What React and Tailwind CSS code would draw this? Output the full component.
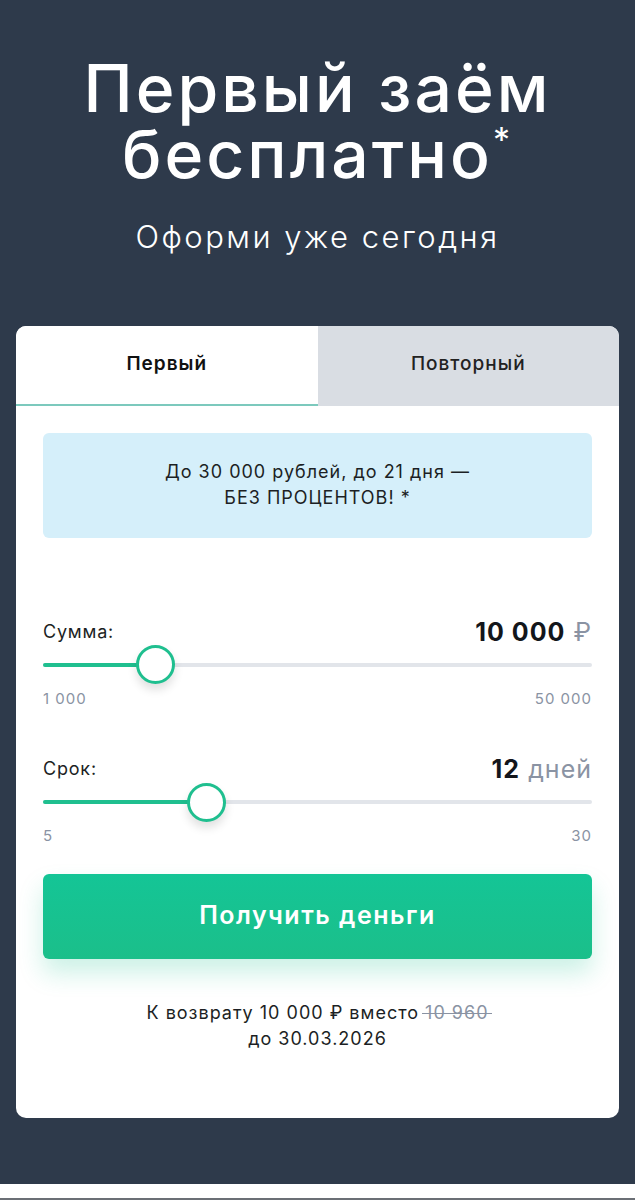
import { useState } from 'react';

const FONT = { fontFamily: 'Inter, "Noto Sans", sans-serif' };

function Slider({ label, value, unit, min, max, percent }) {
    return (
        <div>
            <div className="flex items-end justify-between">
                <span className="text-[18px] tracking-[0.8px] text-[#1c1f24]">{label}</span>
                <span className="text-[25px] leading-none tracking-[1px]">
                    <span className="font-bold text-[#13161b]">{value}</span>{' '}
                    <span className="text-[#8a93a3]">{unit}</span>
                </span>
            </div>
            <div className="relative mt-[1px] h-[38px] flex items-center">
                <div className="h-[4px] w-full bg-[#e2e5ea] rounded-full" />
                <div
                    className="absolute left-0 h-[4px] bg-[#1fbf8f] rounded-full"
                    style={{ width: `${percent}%` }}
                />
                <div
                    className="absolute w-[39px] h-[39px] -ml-[19px] rounded-full bg-white border-[3px] border-[#1fbf8f] shadow-[0_6px_10px_rgba(0,0,0,0.12)]"
                    style={{ left: `${percent}%` }}
                />
            </div>
            <div className="flex justify-between mt-[4px] text-[15px] tracking-[1px] text-[#8a93a3]">
                <span>{min}</span>
                <span>{max}</span>
            </div>
        </div>
    );
}

export default function App() {
    const [tab, setTab] = useState('first');

    return (
        <div className="min-h-[1200px] bg-white" style={FONT}>
            <div className="bg-[#2e3a4b] pt-[55px] pb-[66px] px-4">
                <h1 className="text-white text-center text-[66px] leading-[66px] font-medium tracking-[3px]">
                    <div>Первый заём</div>
                    <div>
                        бесплатно
                        <span className="inline-block align-top text-[34px] leading-none font-normal relative top-[2px]">*</span>
                    </div>
                </h1>
                <p className="mt-[27px] text-center text-white text-[31px] font-light tracking-[2.5px]">Оформи уже сегодня</p>

                <div className="mt-[65px] bg-white rounded-[10px] overflow-hidden">
                    <div className="grid grid-cols-2 h-[80px] text-[19px] tracking-[1px]">
                        <button
                            onClick={() => setTab('first')}
                            className={`border-b-2 ${tab === 'first' ? 'bg-white border-[#7cc9bd] text-[#111] font-semibold' : 'bg-[#d9dde3] border-transparent text-[#222] font-medium'}`}
                        >
                            Первый
                        </button>
                        <button
                            onClick={() => setTab('repeat')}
                            className={`border-b-2 ${tab === 'repeat' ? 'bg-white border-[#7cc9bd] text-[#111] font-semibold' : 'bg-[#d9dde3] border-transparent text-[#222] font-medium'}`}
                        >
                            Повторный
                        </button>
                    </div>

                    <div className="px-[27px] pt-[27px] pb-[66px]">
                        <div className="bg-[#d5effa] rounded-[6px] h-[105px] flex flex-col items-center justify-center text-[18px] leading-[26px] tracking-[1px] text-[#1c1f24]">
                            <p>До 30 000 рублей, до 21 дня —</p>
                            <p>БЕЗ ПРОЦЕНТОВ! *</p>
                        </div>

                        <div className="mt-[80px]">
                            <Slider label="Сумма:" value="10 000" unit="₽" min="1 000" max="50 000" percent={20.4} />
                        </div>
                        <div className="mt-[45px]">
                            <Slider label="Срок:" value="12" unit="дней" min="5" max="30" percent={29.6} />
                        </div>

                        <button className="mt-[26px] w-full h-[85px] rounded-[6px] bg-gradient-to-b from-[#14c596] to-[#1bbf8a] text-white text-[25px] font-semibold tracking-[1.5px] shadow-[0_14px_24px_rgba(24,190,140,0.22)]">
                            Получить деньги
                        </button>

                        <div className="mt-[41px] text-center text-[18px] leading-[26px] tracking-[1px] text-[#1c1f24]">
                            <p>
                                К возврату 10 000 ₽ вместо{' '}
                                <span className="relative inline-block text-[#8a93a3]">
                                    10 960
                                    <span className="absolute -left-[3px] -right-[3px] top-[52%] h-px bg-[#8a93a3]" />
                                </span>
                            </p>
                            <p>до 30.03.2026</p>
                        </div>
                    </div>
                </div>
            </div>
            <div className="h-[14px] bg-white" />
            <div className="h-[3px] bg-[#6b6f75]" />
        </div>
    );
}
